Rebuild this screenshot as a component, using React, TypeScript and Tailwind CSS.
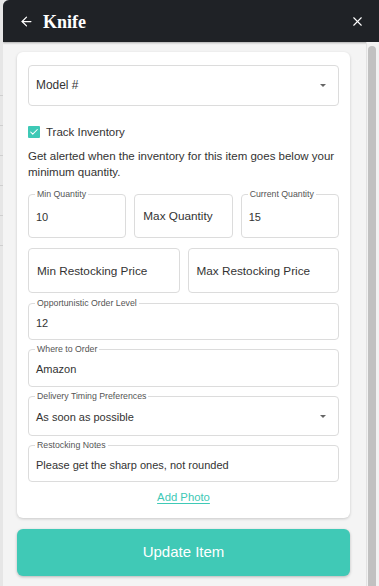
import { ArrowLeft, X, Check } from 'lucide-react'

const font = { fontFamily: '"Liberation Sans", Arial, sans-serif' }

function Outlined({
  label,
  value,
  className = '',
  caret = false,
}: {
  label: string
  value: string
  className?: string
  caret?: boolean
}) {
  return (
    <div className={`relative border border-[#dcdcdc] rounded-[4px] flex items-center pl-[7px] pr-3 ${className}`}>
      <span className="absolute -top-[6px] left-[6px] bg-white px-[2px] text-[8.75px] leading-[11px] text-[#555]">
        {label}
      </span>
      <span className="text-[11px] text-[#333] flex-1 pt-[3px]">{value}</span>
      {caret && (
        <span className="w-0 h-0 border-l-[3px] border-r-[3px] border-t-[3.5px] border-l-transparent border-r-transparent border-t-[#666]" />
      )}
    </div>
  )
}

function Placeholder({ text, className = '' }: { text: string; className?: string }) {
  return (
    <div className={`border border-[#dcdcdc] rounded-[4px] flex items-center pl-[8px] ${className}`}>
      <span className="text-[11.75px] text-[#333]">{text}</span>
    </div>
  )
}

export default function App() {
  return (
    <div className="w-[379px] h-[586px] flex bg-[#e9e9e9] overflow-hidden" style={font}>
      <div className="w-[3px] flex flex-col bg-[#e6e6e6]">
        <div className="h-[95px]" />
        <div className="h-[30px] border-t border-[#cfcfcf]" />
        <div className="h-[30px] border-t border-[#cfcfcf]" />
        <div className="h-[30px] border-t border-[#cfcfcf]" />
        <div className="h-[30px] border-t border-[#cfcfcf]" />
        <div className="h-[30px] border-t border-[#cfcfcf]" />
        <div className="h-[30px] border-t border-[#cfcfcf]" />
      </div>
      <div className="flex-1 flex flex-col rounded-tl-[6px] overflow-hidden bg-[#f4f4f4]">
        <header className="h-[42px] shrink-0 bg-[#1f2226] flex items-center pl-[16px] pr-[14px] shadow-[0_1px_2px_rgba(0,0,0,0.3)]">
          <ArrowLeft className="w-[15px] h-[15px] text-white" strokeWidth={2} />
          <h1
            className="ml-[9px] mt-[1px] text-white text-[18px] font-bold leading-none"
            style={{ fontFamily: '"Liberation Serif", "Times New Roman", serif' }}
          >
            Knife
          </h1>
          <div className="flex-1" />
          <X className="w-[15px] h-[15px] text-white" strokeWidth={1.75} />
        </header>
        <div className="flex-1 flex">
          <div className="flex-1 pl-[14px] pr-[16px] pt-[10px]">
            <div className="bg-white rounded-[6px] shadow-[0_1px_3px_rgba(0,0,0,0.18)] px-[11px] pt-[13px] pb-[13px]">
              <div className="h-[41px] border border-[#dcdcdc] rounded-[4px] flex items-center pl-[7px] pr-3">
                <span className="text-[11.9px] text-[#333] flex-1">Model #</span>
                <span className="w-0 h-0 border-l-[3px] border-r-[3px] border-t-[3.5px] border-l-transparent border-r-transparent border-t-[#666]" />
              </div>

              <label className="mt-[18px] flex items-center gap-[6px] leading-[16px]">
                <span className="w-[12px] h-[12px] bg-[#3ec9b6] rounded-[1px] flex items-center justify-center">
                  <Check className="w-[10px] h-[10px] text-white" strokeWidth={2.5} />
                </span>
                <span className="text-[11.5px] text-[#333]">Track Inventory</span>
              </label>

              <p className="mt-[8px] text-[11.5px] leading-[16px] text-[#333]">
                Get alerted when the inventory for this item goes below your minimum quantity.
              </p>

              <div className="mt-[14px] grid grid-cols-3 gap-[8px]">
                <Outlined label="Min Quantity" value="10" className="h-[44px]" />
                <Placeholder text="Max Quantity" className="h-[44px]" />
                <Outlined label="Current Quantity" value="15" className="h-[44px]" />
              </div>

              <div className="mt-[10px] grid grid-cols-2 gap-[8px]">
                <Placeholder text="Min Restocking Price" className="h-[45px]" />
                <Placeholder text="Max Restocking Price" className="h-[45px]" />
              </div>

              <div className="mt-[10px] flex flex-col gap-[9px]">
                <Outlined label="Opportunistic Order Level" value="12" className="h-[37px]" />
                <Outlined label="Where to Order" value="Amazon" className="h-[38px]" />
                <Outlined label="Delivery Timing Preferences" value="As soon as possible" className="h-[40px]" caret />
                <Outlined label="Restocking Notes" value="Please get the sharp ones, not rounded" className="h-[37px]" />
              </div>

              <div className="mt-[6px] text-center leading-[16px]">
                <a href="#" className="text-[11.3px] text-[#3ec9b6] underline underline-offset-2">
                  Add Photo
                </a>
              </div>
            </div>

            <button className="mt-[11px] w-full h-[47px] rounded-[6px] bg-[#40c9b6] text-white text-[15px] shadow-[0_1px_3px_rgba(0,0,0,0.25)]">
              Update Item
            </button>
          </div>
          <div className="w-[13px] border-l border-[#e2e2e2] bg-[#f2f2f2] pt-[4px] pl-[1px]">
            <div className="w-[8px] h-full bg-[#c1c1c1] rounded-t-[4px]" />
          </div>
        </div>
      </div>
    </div>
  )
}
